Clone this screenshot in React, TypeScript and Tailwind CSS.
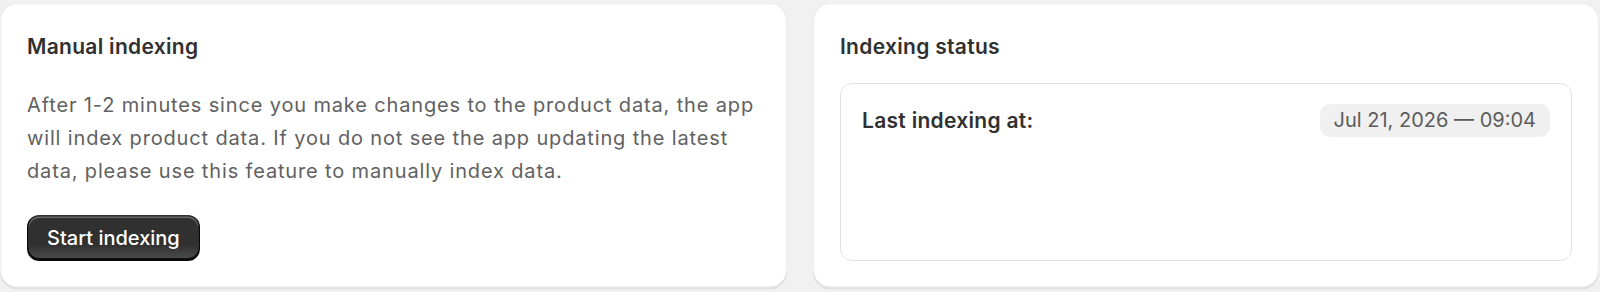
const cardShadow =
  'shadow-[0_1.5px_0_0_rgba(26,26,26,0.07),inset_0_-1.5px_0_0_rgba(204,204,204,0.5),inset_0_1.5px_0_0_rgba(227,227,227,0.5),inset_1.5px_0_0_0_rgba(227,227,227,0.5),inset_-1.5px_0_0_0_rgba(227,227,227,0.5)]';

function Card({ title, children }: { title: string; children: React.ReactNode }) {
  return (
    <section className={`flex flex-col rounded-[17px] bg-white p-[27px] ${cardShadow}`}>
      <h2 className="text-[21px] font-semibold leading-[34px] tracking-[0.3px] text-[#303030]">
        {title}
      </h2>
      {children}
    </section>
  );
}

export default function App() {
  return (
    <div
      className="h-[292px] bg-[#f1f1f1] pt-[3px] pr-[1px] antialiased"
      style={{ fontFamily: 'Inter, "Noto Sans", sans-serif' }}
    >
      <div className="grid grid-cols-[787px_1fr] gap-[26px]">
        {/* Manual indexing */}
        <Card title="Manual indexing">
          <p className="mt-[25px] -mr-[4px] text-[20px] leading-[33px] tracking-[0.85px] text-[#616161]">
            After 1-2 minutes since you make changes to the product data, the app will index
            product data. If you do not see the app updating the latest data, please use this
            feature to manually index data.
          </p>
          <div className="mt-[27px]">
            <button className="h-[46px] rounded-[12px] bg-[#303030] bg-[linear-gradient(180deg,rgba(48,48,48,0)_63%,rgba(255,255,255,0.15)_100%)] px-[20px] text-[20px] font-medium text-white shadow-[inset_0_-1.5px_0_1.5px_rgba(0,0,0,0.8),inset_0_0_0_1.5px_#303030,inset_0_1px_0_2px_#666]">
              Start indexing
            </button>
          </div>
        </Card>

        {/* Indexing status */}
        <Card title="Indexing status">
          <div className="mt-[19px] flex-1 rounded-[12px] border border-[#e3e3e3] px-[21px] py-[20px]">
            <div className="flex items-center justify-between">
              <span className="text-[21px] font-semibold leading-[33px] tracking-[0.3px] text-[#303030]">
                Last indexing at:
              </span>
              <span className="rounded-[10px] bg-[#f0f0f0] px-[14px] text-[20px] leading-[33px] text-[#5c5c5c]">
                Jul 21, 2026 — 09:04
              </span>
            </div>
          </div>
        </Card>
      </div>
    </div>
  );
}
